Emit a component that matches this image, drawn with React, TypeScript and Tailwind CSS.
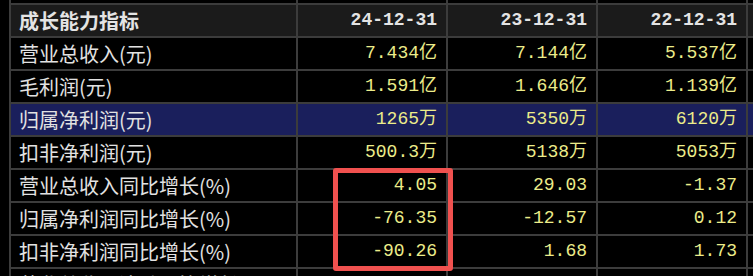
import React from 'react';

type Row = { label: string; values: string[]; highlight?: boolean };

const rows: Row[] = [
  { label: '营业总收入(元)', values: ['7.434亿', '7.144亿', '5.537亿'] },
  { label: '毛利润(元)', values: ['1.591亿', '1.646亿', '1.139亿'] },
  { label: '归属净利润(元)', values: ['1265万', '5350万', '6120万'], highlight: true },
  { label: '扣非净利润(元)', values: ['500.3万', '5138万', '5053万'] },
  { label: '营业总收入同比增长(%)', values: ['4.05', '29.03', '-1.37'] },
  { label: '归属净利润同比增长(%)', values: ['-76.35', '-12.57', '0.12'] },
  { label: '扣非净利润同比增长(%)', values: ['-90.26', '1.68', '1.73'] },
  { label: '营业总收入滚动环比增长(%)', values: ['', '', ''] },
];

const labelFont = "font-['Noto_Sans_CJK_SC',sans-serif]";
const numFont = "font-['Liberation_Mono','Noto_Sans_CJK_SC',monospace]";

export default function App() {
  return (
    <div className="w-[753px] h-[276px] overflow-hidden bg-black pl-[9px]">
      <div className="relative w-[760px]">
        <div className="grid grid-cols-[285px_148px_148px_148px_148px] gap-[2px] pl-[2px] bg-[#3c3c3c]">
          {/* cut-off row above */}
          {[0, 1, 2, 3, 4].map((i) => (
            <div key={`top-${i}`} className="h-[3px] bg-black" />
          ))}

          {/* header */}
          <div className={`h-[31px] bg-[#1b1b1b] flex items-center pl-[8px] text-[20px] font-bold text-[#e4e4e4] ${labelFont}`}>
            成长能力指标
          </div>
          {['24-12-31', '23-12-31', '22-12-31'].map((d) => (
            <div
              key={d}
              className={`h-[31px] bg-[#1b1b1b] flex items-center justify-end pr-[9px] text-[18px] font-bold text-[#e4e4e4] ${numFont}`}
            >
              {d}
            </div>
          ))}
          <div className="h-[31px] bg-[#1b1b1b]" />

          {rows.map((r) => {
            const bg = r.highlight ? 'bg-[#1a1f5c]' : 'bg-black';
            return (
              <React.Fragment key={r.label}>
                <div className={`h-[31px] ${bg} flex items-center pl-[8px] text-[20px] text-[#e2e2e2] whitespace-nowrap ${labelFont}`}>
                  {r.label}
                </div>
                {r.values.map((v, i) => (
                  <div
                    key={i}
                    className={`h-[31px] ${bg} flex items-center justify-end pr-[9px] text-[18px] text-[#ecec8a] whitespace-nowrap ${numFont}`}
                  >
                    {v}
                  </div>
                ))}
                <div className={`h-[31px] ${bg}`} />
              </React.Fragment>
            );
          })}
        </div>

        {/* red highlight box */}
        <div className="absolute left-[324px] top-[168px] w-[120px] h-[103px] border-[5px] border-[#f0514f] rounded-[3px]" />
      </div>
    </div>
  );
}
